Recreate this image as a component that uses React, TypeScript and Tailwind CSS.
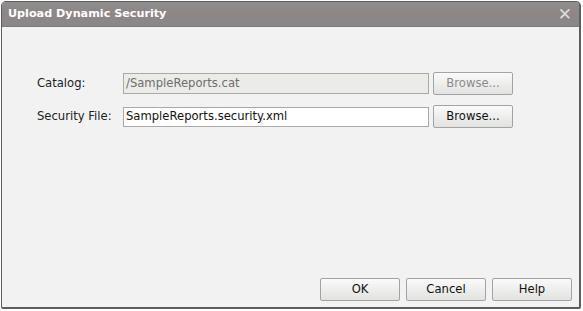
import React from "react";

const font = { fontFamily: '"DejaVu Sans", Verdana, sans-serif' };

function Btn({ children, disabled }: { children: React.ReactNode; disabled?: boolean }) {
  return (
    <button
      className={
        "w-[80px] h-[23px] border border-[#a3a3a3] rounded-[2px] bg-gradient-to-b from-[#fafafa] to-[#e2e2e0] text-[11.6px] leading-none flex items-center justify-center " +
        (disabled ? "text-[#8a8a8a]" : "text-[#111]")
      }
    >
      {children}
    </button>
  );
}

export default function App() {
  return (
    <div className="w-[583px] h-[311px] bg-white" style={font}>
      <div className="ml-[1px] mt-[1px] w-[580px] h-[308px] border border-[#5e5e5e] border-r-2 border-b-2 rounded-t-[5px] rounded-b-[2px] bg-[#f2f2f2] flex flex-col overflow-hidden">
        <div className="h-[25px] shrink-0 bg-gradient-to-b from-[#8e8e8e] via-[#8f8585] to-[#898989] flex items-center justify-between pl-[6px] pr-[7px] border-b border-[#7a7a7a]">
          <span className="text-white font-bold text-[11.2px]">Upload Dynamic Security</span>
          <span className="text-[#dcdcdc] font-bold text-[17px] leading-none">✕</span>
        </div>
        <div className="flex-1 flex flex-col pt-[45px] pl-[35px]">
          <div className="flex items-center h-[23px]">
            <div className="w-[86px] text-[11.6px] text-[#222]">Catalog:</div>
            <div className="w-[306px] h-[21px] border border-[#a9a9a9] bg-[#ebebe8] text-[11.6px] text-[#6e6e6e] flex items-center px-[2px] mr-[4px]">
              /SampleReports.cat
            </div>
            <Btn disabled>Browse...</Btn>
          </div>
          <div className="flex items-center h-[23px] mt-[10px]">
            <div className="w-[86px] text-[11.6px] text-[#222]">Security File:</div>
            <div className="w-[306px] h-[20px] border border-[#a9a9a9] bg-white text-[11.6px] text-[#111] flex items-center px-[2px] mr-[4px]">
              SampleReports.security.xml
            </div>
            <Btn>Browse...</Btn>
          </div>
          <div className="flex-1" />
        </div>
        <div className="flex justify-end gap-[6px] pr-[7px] pb-[6px]">
          <Btn>OK</Btn>
          <Btn>Cancel</Btn>
          <Btn>Help</Btn>
        </div>
      </div>
    </div>
  );
}
